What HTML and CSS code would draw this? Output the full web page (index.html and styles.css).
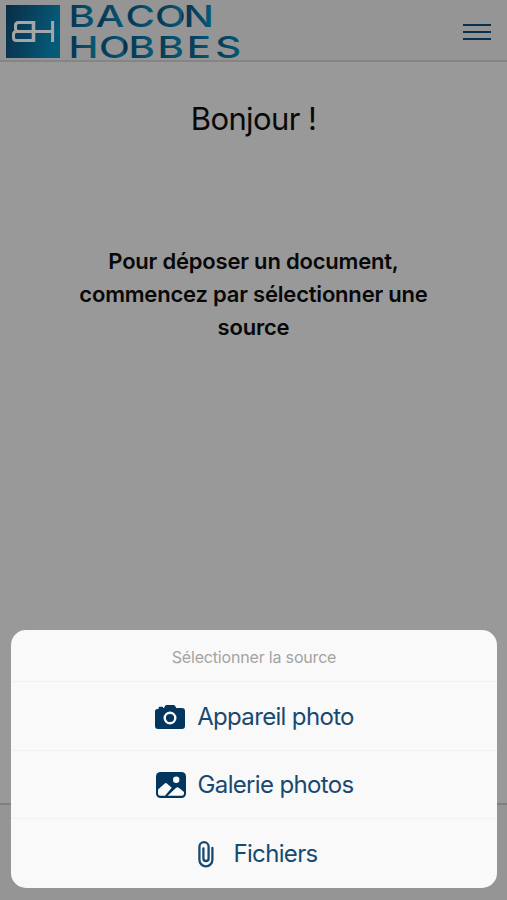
FILE: index.html
```html
<!DOCTYPE html>
<html lang="fr">
<head>
<meta charset="utf-8">
<meta name="viewport" content="width=device-width, initial-scale=1">
<title>Bacon Hobbes</title>
<link rel="stylesheet" href="styles.css">
</head>
<body>
<div class="page">
  <header class="topbar">
    <svg class="logo" width="250" height="60" viewBox="0 0 250 60" role="img" aria-label="Bacon Hobbes">
      <defs>
        <linearGradient id="tile" x1="0" y1="0" x2="1" y2="0.25">
          <stop offset="0" stop-color="#0a2c46"/><stop offset="1" stop-color="#055a78"/>
        </linearGradient>
        <linearGradient id="ink" gradientUnits="userSpaceOnUse" x1="50.7" y1="0" x2="72.5" y2="0" spreadMethod="repeat">
          <stop offset="0" stop-color="#07304d"/><stop offset="1" stop-color="#055a76"/>
        </linearGradient>
      </defs>
      <rect x="6" y="5" width="54" height="53" fill="url(#tile)"/>
      <g fill="none" stroke="#a3a7a9" stroke-width="3">
        <path d="M34.2 22.5H18.5Q15.5 22.5 15.5 25.5V28.5Q15.5 31.5 18.5 31.5H52.6M34.2 40.5H16.5Q13.5 40.5 13.5 37.5V34.5Q13.5 31.5 16.5 31.5H19M52.6 21V42"/>
        <path stroke-width="3.6" d="M33.5 21V42"/>
      </g>
      <g class="wordmark" fill="url(#ink)">
        <text transform="translate(0 27) scale(1.32 1)" x="51.8 72.6 95 117.4 139">BACON</text>
        <text transform="translate(0 58) scale(1.32 1)" x="51.8 75 97.4 119.4 141.5 163">HOBBES</text>
      </g>
    </svg>
    <button class="menu" aria-label="Menu"><span></span><span></span><span></span></button>
  </header>
  <main class="content">
    <h1>Bonjour !</h1>
    <p>Pour déposer un document,<br>commencez par sélectionner une<br>source</p>
  </main>
  <footer class="tabbar"></footer>
</div>
<section class="sheet">
  <h2>Sélectionner la source</h2>
  <button class="option">
    <svg class="icon" width="32" height="28" viewBox="0 0 32 28"><path fill="#03365f" d="M4.6 6V4.8Q4.6 3.8 5.6 3.8H8.2Q9.2 3.8 9.2 4.8V5H10L11 3Q11.6 2 12.8 2H19.4Q20.6 2 21.2 3L22.3 5H28Q31 5 31 8V23Q31 26 28 26H4Q1 26 1 23V8.5Q1 6 3.5 6Z"/><circle cx="16" cy="15" r="5.3" fill="none" stroke="#f9f9f9" stroke-width="2.4"/></svg>
    <span>Appareil photo</span>
  </button>
  <button class="option">
    <svg class="icon" width="32" height="28" viewBox="0 0 32 28"><rect x="1" y="1" width="30" height="26" rx="4.5" fill="#03365f"/><circle cx="21.2" cy="8.8" r="3.2" fill="#f9f9f9"/><path fill="#f9f9f9" d="M3 18.5L9.5 12.7Q10.9 11.5 12.2 12.7L16.7 16.8L10 24.8H5.3Q3 24.8 3 22.5ZM12.6 24.8L21.2 16.7Q22.5 15.6 23.8 16.7L29 21V22.5Q29 24.8 26.7 24.8Z"/></svg>
    <span>Galerie photos</span>
  </button>
  <button class="option">
    <svg class="icon" width="32" height="28" viewBox="0 0 32 28"><path fill="none" stroke="#184971" stroke-width="2.3" stroke-linecap="round" d="M22.4 8V19.8A6.5 6.5 0 0 1 9.4 19.8V6.8A4.6 4.6 0 0 1 18.6 6.8V18.4A2.6 2.6 0 0 1 13.4 18.4V8.5"/></svg>
    <span>Fichiers</span>
  </button>
</section>
</body>
</html>
```
FILE: styles.css
```css
* { box-sizing: border-box; }
body {
  margin: 0;
  height: 900px;
  overflow: hidden;
  background: #999;
  font-family: Inter, "Liberation Sans", sans-serif;
  color: #080808;
}
.page { display: flex; flex-direction: column; height: 900px; }
.topbar {
  display: flex;
  justify-content: space-between;
  height: 62px;
  background: #959595;
  border-bottom: 2px solid #858585;
}
.logo { overflow: visible; }
.wordmark { font: 500 30.5px Inter, sans-serif; }
.menu {
  display: flex;
  flex-direction: column;
  gap: 5px;
  width: 28px;
  margin: 24px 16px 0 0;
  padding: 0;
  border: 0;
  background: none;
}
.menu span { height: 2px; background: #08304d; }
.content { flex: 1; text-align: center; }
h1 {
  margin: 36px 0 0;
  font-size: 31px;
  font-weight: 400;
  line-height: 41px;
  letter-spacing: -0.6px;
}
p {
  margin: 106px 0 0;
  font-size: 22px;
  font-weight: 600;
  line-height: 33px;
  letter-spacing: -0.2px;
}
.tabbar { height: 97px; border-top: 2px solid #808080; background: #959595; }
.sheet {
  position: absolute;
  left: 11px;
  top: 630px;
  width: 486px;
  height: 257.5px;
  border-radius: 15px;
  overflow: hidden;
  background: #f9f9f9;
}
h2 {
  margin: 0;
  height: 51px;
  font-size: 16px;
  font-weight: 400;
  line-height: 55px;
  letter-spacing: -0.18px;
  text-align: center;
  color: #a3a3a3;
}
.option {
  display: flex;
  align-items: center;
  justify-content: center;
  gap: 11px;
  width: 100%;
  height: 68.5px;
  padding: 2px 0 0;
  border: 0;
  border-top: 1.5px solid #f1f1f1;
  background: none;
  font: 400 24px/34px Inter, "Liberation Sans", sans-serif;
  letter-spacing: -0.66px;
  color: #184971;
}
```
